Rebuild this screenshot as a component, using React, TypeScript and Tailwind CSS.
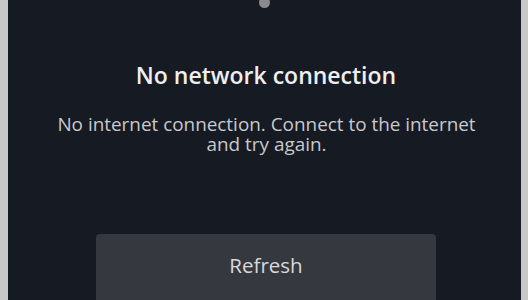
export default function App() {
  return (
    <div className="w-full h-[300px] bg-[#c8c8c8] pl-[8px] pr-[7px] overflow-hidden" style={{ fontFamily: '"Open Sans", sans-serif' }}>
      <div className="h-full bg-[#161a22] flex flex-col items-center overflow-hidden">
        <div className="w-[11px] h-[11px] rounded-full bg-[#8a8b90] -mt-[3px] shrink-0" />
        <h1 className="mt-[53px] text-[23px] leading-[28px] font-semibold text-[#eeeef0] ml-[3px]">No network connection</h1>
        <p className="mt-[25px] text-[18.9px] leading-[20px] text-[#c8c9cc] text-center w-[450px] ml-[4px]">
          No internet connection. Connect to the internet and try again.
        </p>
        <button className="mt-[80px] w-[340px] h-[70px] shrink-0 rounded-[4px] bg-[#363840] text-[20.5px] leading-[24px] text-[#d9d9dc] flex items-start justify-center pt-[19px] ml-[3px]">
          Refresh
        </button>
      </div>
    </div>
  );
}
